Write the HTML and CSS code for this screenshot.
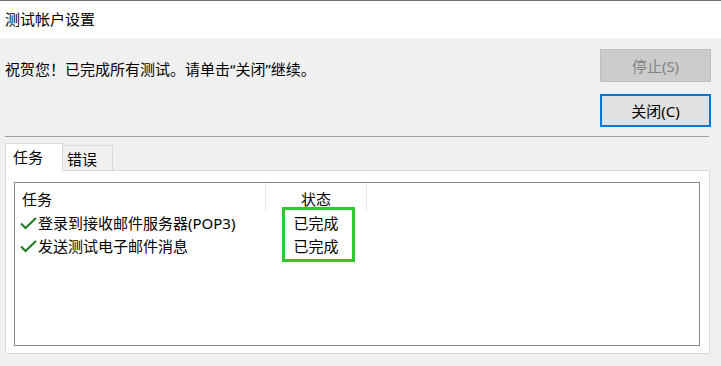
FILE: index.html
```html
<!DOCTYPE html>
<html lang="zh-CN">
<head>
<meta charset="utf-8">
<title>测试帐户设置</title>
<link rel="stylesheet" href="styles.css">
</head>
<body>
<div class="titlebar">测试帐户设置</div>
<div class="content">
  <div class="top">
    <div class="message">祝贺您！已完成所有测试。请单击“关闭”继续。</div>
    <div class="buttons">
      <div class="btn btn-disabled">停止(S)</div>
      <div class="btn btn-default">关闭(C)</div>
    </div>
  </div>
  <div class="separator"></div>
  <div class="tabs">
    <div class="tab tab-active">任务</div>
    <div class="tab tab-inactive">错误</div>
  </div>
  <div class="panel">
    <div class="listbox">
      <div class="header">
        <div class="col-task hcell">任务</div>
        <div class="col-status hcell hcenter">状态</div>
      </div>
      <div class="rows">
        <div class="row">
          <div class="col-task cell">
            <svg class="check" width="17" height="13" viewBox="0 0 17 13"><polyline points="1,6.5 5.5,11 16,1" fill="none" stroke="#1f7a1f" stroke-width="2"/></svg>
            <span>登录到接收邮件服务器(POP3)</span>
          </div>
          <div class="col-status cell center">已完成</div>
        </div>
        <div class="row">
          <div class="col-task cell">
            <svg class="check" width="17" height="13" viewBox="0 0 17 13"><polyline points="1,6.5 5.5,11 16,1" fill="none" stroke="#1f7a1f" stroke-width="2"/></svg>
            <span>发送测试电子邮件消息</span>
          </div>
          <div class="col-status cell center">已完成</div>
        </div>
      </div>
      <div class="highlight"></div>
    </div>
  </div>
</div>
</body>
</html>
```
FILE: styles.css
```css
html, body {
  margin: 0;
  padding: 0;
}
body {
  width: 721px;
  height: 366px;
  overflow: hidden;
  background: #f0f0f0;
  font-family: "Noto Sans", "Noto Sans CJK SC", sans-serif;
  font-size: 15px;
  color: #000;
}
.titlebar {
  border-top: 1px solid #707070;
  height: 37px;
  line-height: 37px;
  background: #fff;
  padding-left: 5px;
}
.content {
  height: 328px;
}
.top {
  display: flex;
  align-items: flex-start;
}
.message {
  padding: 21px 0 0 5px;
  line-height: 20px;
  flex: 1;
}
.buttons {
  display: flex;
  flex-direction: column;
  gap: 12px;
  padding: 11px 10px 0 0;
}
.btn {
  box-sizing: border-box;
  width: 111px;
  height: 33px;
  display: flex;
  align-items: center;
  justify-content: center;
  line-height: 20px;
}
.btn-disabled {
  background: #cccccc;
  border: 1px solid #bfbfbf;
  color: #838383;
}
.btn-default {
  background: #e1e1e1;
  border: 2px solid #0078d7;
  color: #000;
}
.separator {
  height: 1px;
  background: #a0a0a0;
  margin: 9px 12px 0 5px;
}
.tabs {
  display: flex;
  align-items: flex-end;
  margin: 6px 0 0 5px;
  height: 27px;
}
.tab {
  box-sizing: border-box;
  line-height: 20px;
}
.tab-active {
  position: relative;
  z-index: 1;
  width: 58px;
  height: 28px;
  margin-bottom: -1px;
  background: #fff;
  border: 1px solid #d9d9d9;
  border-bottom: none;
  padding: 3px 0 0 7px;
}
.tab-inactive {
  width: 50px;
  height: 25px;
  background: #f0f0f0;
  border-top: 1px solid #d9d9d9;
  border-right: 1px solid #d9d9d9;
  padding: 3px 0 0 4px;
}
.panel {
  box-sizing: border-box;
  margin: 0 11px 0 5px;
  height: 184px;
  background: #fff;
  border: 1px solid #d9d9d9;
  padding: 11px 9px 7px 8px;
}
.listbox {
  position: relative;
  box-sizing: border-box;
  height: 164px;
  border: 1px solid #828790;
  background: #fff;
}
.header {
  display: flex;
  height: 28px;
}
.hcell {
  box-sizing: border-box;
  height: 28px;
  padding-top: 4px;
  line-height: 24px;
  border-right: 1px solid #e5e5e5;
}
.header .col-task {
  padding-left: 7px;
}
.col-task {
  box-sizing: border-box;
  width: 251px;
}
.col-status {
  box-sizing: border-box;
  width: 101px;
}
.hcenter, .center {
  text-align: center;
}
.rows {
  margin-top: 1px;
}
.row {
  display: flex;
  height: 23px;
  line-height: 23px;
}
.cell {
  display: flex;
  align-items: center;
}
.cell.col-task {
  padding-left: 5px;
  gap: 1px;
}
.cell.center {
  justify-content: center;
  padding-right: 1px;
}
.check {
  display: block;
  flex: none;
}
.highlight {
  position: absolute;
  left: 267px;
  top: 24px;
  width: 73px;
  height: 55px;
  box-sizing: border-box;
  border: 3px solid #2fc92f;
}
```
